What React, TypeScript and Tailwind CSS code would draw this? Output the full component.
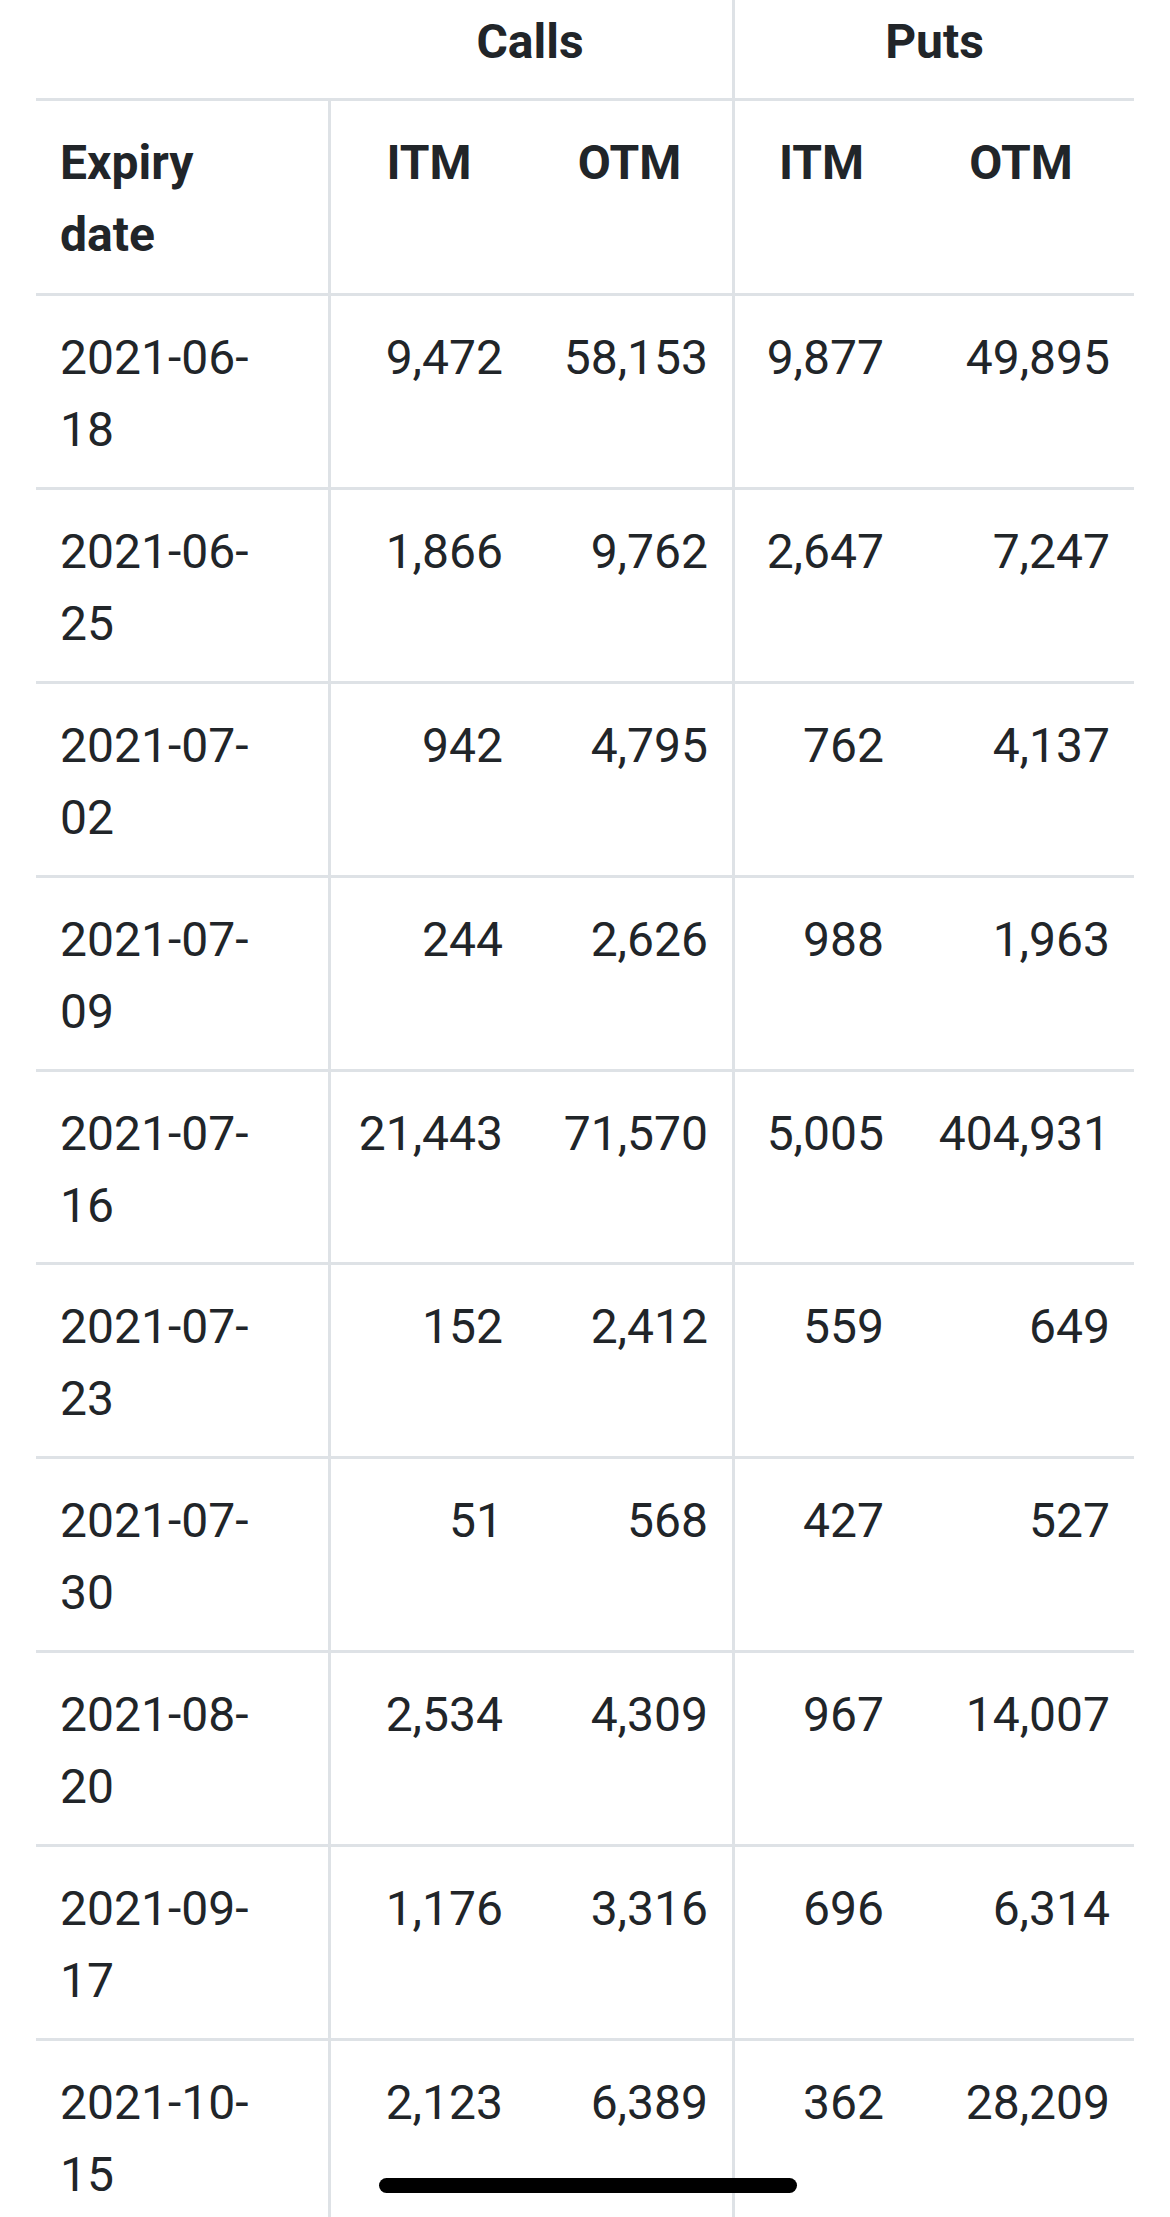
import React from "react";

const rows: string[][] = [
  ["2021-06-18", "9,472", "58,153", "9,877", "49,895"],
  ["2021-06-25", "1,866", "9,762", "2,647", "7,247"],
  ["2021-07-02", "942", "4,795", "762", "4,137"],
  ["2021-07-09", "244", "2,626", "988", "1,963"],
  ["2021-07-16", "21,443", "71,570", "5,005", "404,931"],
  ["2021-07-23", "152", "2,412", "559", "649"],
  ["2021-07-30", "51", "568", "427", "527"],
  ["2021-08-20", "2,534", "4,309", "967", "14,007"],
  ["2021-09-17", "1,176", "3,316", "696", "6,314"],
  ["2021-10-15", "2,123", "6,389", "362", "28,209"],
];

export default function App() {
  return (
    <div
      className="relative w-[1170px] h-[2217px] overflow-hidden bg-white text-[#212529] text-[48px] leading-[72px]"
      style={{ fontFamily: "Roboto, 'Liberation Sans', sans-serif" }}
    >
      <div className="px-[36px]">
        <div className="grid grid-cols-[292px_199px_205px_176px_226px]">
          {/* group header row */}
          <div className="border-b-[3px] border-[#dee2e6] pt-[6px] pb-[20px] px-[24px]" />
          <div className="col-span-2 border-b-[3px] border-[#dee2e6] pt-[6px] pb-[20px] px-[24px] text-center font-bold">
            Calls
          </div>
          <div className="col-span-2 border-b-[3px] border-l-[3px] border-[#dee2e6] pt-[6px] pb-[20px] px-[24px] text-center font-bold">
            Puts
          </div>

          {/* column header row */}
          <div className="border-b-[3px] border-[#dee2e6] pt-[26px] pb-[22px] px-[24px] font-bold">
            Expiry
            <br />
            date
          </div>
          <div className="border-b-[3px] border-l-[3px] border-[#dee2e6] pt-[26px] pb-[22px] px-[24px] text-center font-bold">
            ITM
          </div>
          <div className="border-b-[3px] border-[#dee2e6] pt-[26px] pb-[22px] px-[24px] text-center font-bold">
            OTM
          </div>
          <div className="border-b-[3px] border-l-[3px] border-[#dee2e6] pt-[26px] pb-[22px] px-[24px] text-center font-bold">
            ITM
          </div>
          <div className="border-b-[3px] border-[#dee2e6] pt-[26px] pb-[22px] px-[24px] text-center font-bold">
            OTM
          </div>

          {rows.map((r) => (
            <React.Fragment key={r[0]}>
              <div className="border-b-[3px] border-[#dee2e6] pt-[26px] pb-[20.9px] px-[24px]">
                {r[0].slice(0, 8)}
                <br />
                {r[0].slice(8)}
              </div>
              <div className="border-b-[3px] border-l-[3px] border-[#dee2e6] pt-[26px] pb-[20.9px] px-[24px] text-right">
                {r[1]}
              </div>
              <div className="border-b-[3px] border-[#dee2e6] pt-[26px] pb-[20.9px] px-[24px] text-right">
                {r[2]}
              </div>
              <div className="border-b-[3px] border-l-[3px] border-[#dee2e6] pt-[26px] pb-[20.9px] px-[24px] text-right">
                {r[3]}
              </div>
              <div className="border-b-[3px] border-[#dee2e6] pt-[26px] pb-[20.9px] px-[24px] text-right">
                {r[4]}
              </div>
            </React.Fragment>
          ))}
        </div>
      </div>

      {/* home indicator */}
      <div className="absolute left-[379px] top-[2178px] w-[418px] h-[15px] rounded-full bg-black" />
    </div>
  );
}
